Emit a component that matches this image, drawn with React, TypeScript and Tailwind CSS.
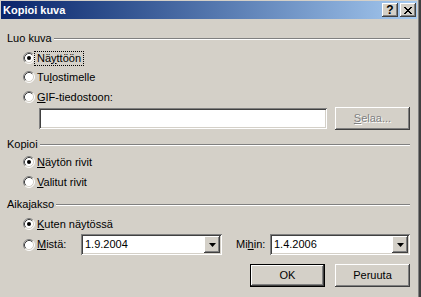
import React from "react";

const RAISED =
  "shadow-[inset_-1px_-1px_0_#404040,inset_1px_1px_0_#ffffff,inset_-2px_-2px_0_#808080,inset_2px_2px_0_#d4d0c8]";
const SUNKEN =
  "shadow-[inset_1px_1px_0_#808080,inset_-1px_-1px_0_#ffffff,inset_2px_2px_0_#404040,inset_-2px_-2px_0_#d4d0c8]";

// Klassinen radionappi 12x12
function Radio({ checked = false }: { checked?: boolean }) {
  return (
    <svg width="12" height="12" viewBox="0 0 12 12" className="shrink-0">
      <circle cx="6" cy="6" r="5" fill="#ffffff" />
      <path d="M2.11 9.89A5.5 5.5 0 0 1 9.89 2.11" stroke="#808080" fill="none" />
      <path d="M9.89 2.11A5.5 5.5 0 0 1 2.11 9.89" stroke="#ffffff" fill="none" />
      <path d="M2.82 9.18A4.5 4.5 0 0 1 9.18 2.82" stroke="#404040" fill="none" />
      <path d="M9.18 2.82A4.5 4.5 0 0 1 2.82 9.18" stroke="#d4d0c8" fill="none" />
      {checked && <circle cx="6" cy="6" r="2" fill="#000000" />}
    </svg>
  );
}

type RowProps = {
  checked?: boolean;
  focus?: boolean;
  className?: string;
  children: React.ReactNode;
};

function RadioRow({ checked, focus, className = "", children }: RowProps) {
  return (
    <div className={`ml-[16px] flex items-center ${className}`}>
      <Radio checked={checked} />
      {focus ? (
        <span className="ml-[-1px] border border-dotted border-black px-[2px] py-px">{children}</span>
      ) : (
        <span className="ml-[2px]">{children}</span>
      )}
    </div>
  );
}

function Group({ label, className = "" }: { label: string; className?: string }) {
  return (
    <div className={`flex items-center gap-[2px] ${className}`}>
      <span>{label}</span>
      <div className="mt-[2px] h-[2px] flex-1 border-t border-b border-t-[#808080] border-b-white" />
    </div>
  );
}

function Combo({ value, width }: { value: string; width: string }) {
  return (
    <div className={`flex h-[21px] ${width} bg-white p-[2px] ${SUNKEN}`}>
      <span className="flex flex-1 items-center pl-[2px]">{value}</span>
      <div className={`flex w-[16px] items-center justify-center bg-[#d4d0c8] ${RAISED}`}>
        <svg width="7" height="4" viewBox="0 0 7 4">
          <polygon points="0,0 7,0 3.5,4" fill="#000000" />
        </svg>
      </div>
    </div>
  );
}

function TitleBtn({ children }: { children: React.ReactNode }) {
  return (
    <div
      className={`flex h-[14px] w-[16px] items-center justify-center bg-[#d4d0c8] shadow-[inset_-1px_-1px_0_#404040,inset_1px_1px_0_#ffffff,inset_-2px_-2px_0_#808080]`}
    >
      {children}
    </div>
  );
}

function CloseGlyph() {
  const px = [
    [0, 0], [1, 0], [6, 0], [7, 0],
    [1, 1], [2, 1], [5, 1], [6, 1],
    [2, 2], [3, 2], [4, 2], [5, 2],
    [3, 3], [4, 3],
    [2, 4], [3, 4], [4, 4], [5, 4],
    [1, 5], [2, 5], [5, 5], [6, 5],
    [0, 6], [1, 6], [6, 6], [7, 6],
  ];
  return (
    <svg width="8" height="7" viewBox="0 0 8 7" shapeRendering="crispEdges">
      {px.map(([x, y]) => (
        <rect key={`${x}-${y}`} x={x} y={y} width="1" height="1" fill="#000000" />
      ))}
    </svg>
  );
}

export default function App() {
  return (
    <div className="flex h-[297px] w-[421px] overflow-hidden bg-[#d4d0c8] font-['Liberation_Sans',Arial,sans-serif] text-[11px] leading-none text-black">
      <div className="flex w-[418px] flex-col pl-px pt-px">
        {/* Otsikkopalkki */}
        <div className="flex h-[18px] w-[416px] items-center bg-linear-to-r from-[#0a246a] to-[#a6caf0] pl-[2px] pr-[1px]">
          <span className="flex-1 font-bold text-white">Kopioi kuva</span>
          <div className="flex gap-[2px]">
            <TitleBtn>
              <span className="text-[12px] font-bold">?</span>
            </TitleBtn>
            <TitleBtn>
              <CloseGlyph />
            </TitleBtn>
          </div>
        </div>

        <div className="flex flex-col pl-[6px] pr-[8px]">
          <Group label="Luo kuva" className="mt-[11px] h-[16px]" />
          <RadioRow checked focus className="mt-[2px] h-[20px]">
            Nä<span className="underline">y</span>ttöön
          </RadioRow>
          <RadioRow className="h-[18px]">
            Tu<span className="underline">l</span>ostimelle
          </RadioRow>
          <RadioRow className="mt-px h-[20px]">
            <span className="underline">G</span>IF-tiedostoon:
          </RadioRow>
          <div className="flex h-[23px] items-center">
            <div className={`ml-[32px] h-[21px] w-[288px] bg-white ${SUNKEN}`} />
            <div
              className={`ml-[8px] flex h-[23px] w-[75px] items-center justify-center text-[#808080] [text-shadow:1px_1px_0_#ffffff] ${RAISED}`}
            >
              <span>
                <span className="underline">S</span>elaa...
              </span>
            </div>
          </div>

          <Group label="Kopioi" className="mt-[6px] h-[16px]" />
          <RadioRow checked className="mt-px h-[18px]">
            <span className="underline">N</span>äytön rivit
          </RadioRow>
          <RadioRow className="mt-px h-[20px]">
            <span className="underline">V</span>alitut rivit
          </RadioRow>

          <Group label="Aikajakso" className="mt-[4px] h-[16px]" />
          <RadioRow checked className="mt-[2px] h-[20px]">
            <span className="underline">K</span>uten näytössä
          </RadioRow>
          <div className="flex h-[21px] items-center">
            <div className="ml-[16px] flex items-center">
              <Radio />
              <span className="ml-[2px] w-[44px]">
                <span className="underline">M</span>istä:
              </span>
            </div>
            <Combo value="1.9.2004" width="w-[141px]" />
            <span className="ml-[14px] w-[34px]">
              Mi<span className="underline">h</span>in:
            </span>
            <Combo value="1.4.2006" width="w-[140px]" />
          </div>

          <div className="mt-[9px] flex justify-end gap-[10px]">
            <div className={`flex h-[23px] w-[75px] items-center justify-center border border-black ${RAISED}`}>
              OK
            </div>
            <div className={`flex h-[23px] w-[75px] items-center justify-center ${RAISED}`}>Peruuta</div>
          </div>
        </div>
      </div>
      <div className="w-px bg-[#808080]" />
      <div className="w-[2px] bg-[#404040]" />
    </div>
  );
}
